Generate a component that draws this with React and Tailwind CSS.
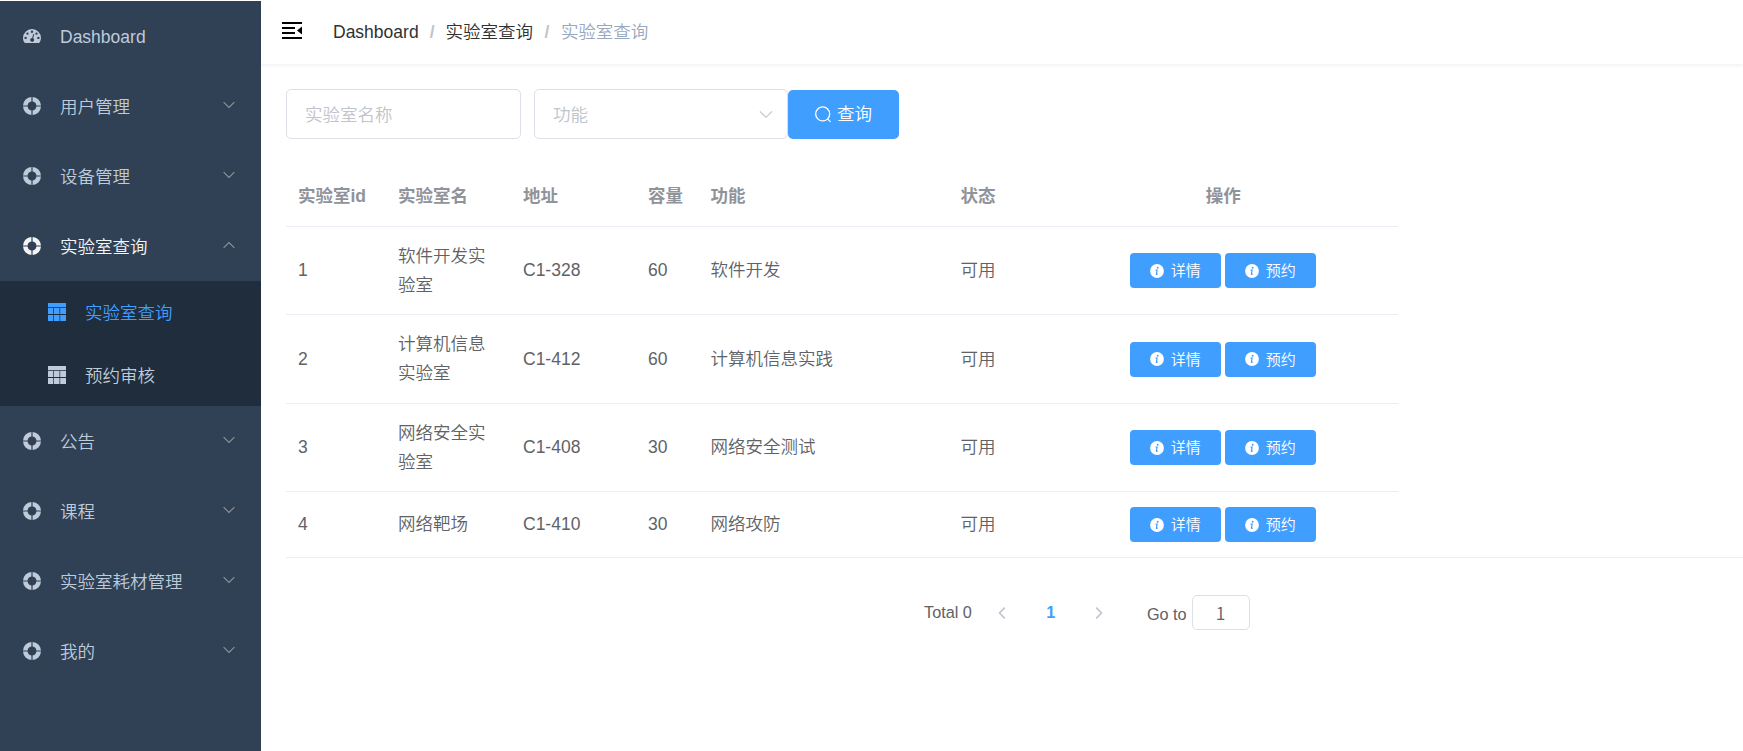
import React, { useState } from "react";

const menu = [
  { title: "Dashboard", icon: "dashboard" },
  { title: "用户管理", children: [] },
  { title: "设备管理", children: [] },
  {
    title: "实验室查询",
    open: true,
    children: [{ title: "实验室查询", active: true }, { title: "预约审核" }],
  },
  { title: "公告", children: [] },
  { title: "课程", children: [] },
  { title: "实验室耗材管理", children: [] },
  { title: "我的", children: [] },
];

const labs = [
  { id: 1, name: "软件开发实验室", address: "C1-328", capacity: 60, usage: "软件开发", status: "可用", height: "h-[88px]" },
  { id: 2, name: "计算机信息实验室", address: "C1-412", capacity: 60, usage: "计算机信息实践", status: "可用", height: "h-[89px]" },
  { id: 3, name: "网络安全实验室", address: "C1-408", capacity: 30, usage: "网络安全测试", status: "可用", height: "h-[88px]" },
  { id: 4, name: "网络靶场", address: "C1-410", capacity: 30, usage: "网络攻防", status: "可用", height: "h-[65px]" },
];

const DashboardIcon = () => (
  <svg viewBox="0 0 18 18" className="w-[18px] h-[18px] shrink-0">
    <path
      fill="currentColor"
      fillRule="evenodd"
      d="M9 2a9 9 0 0 0-9 9c0 1.8.5 3.3 1.4 4.6.2.3.5.4.8.4h13.6c.3 0 .6-.1.8-.4A8.400 8.400 0 0 0 18 11a9 9 0 0 0-9-9zM2.600 9.700a1.200 1.200 0 1 1 0 2.400 1.200 1.200 0 0 1 0-2.400zM4.500 5.400a1.200 1.200 0 1 1 0 2.400 1.200 1.200 0 0 1 0-2.400zM9 3.500a1.200 1.200 0 1 1 0 2.400 1.200 1.200 0 0 1 0-2.400zM13.500 5.400a1.200 1.200 0 1 1 0 2.400 1.200 1.200 0 0 1 0-2.400zM15.400 9.700a1.200 1.200 0 1 1 0 2.400 1.200 1.200 0 0 1 0-2.400zM10.200 7l1 .3-1 3.900a2 2 0 1 1-1-.3z"
    />
  </svg>
);

const RingIcon = () => (
  <svg viewBox="0 0 18 18" className="w-[18px] h-[18px] shrink-0" fill="currentColor">
    <path d="M8.400 0v4.600A4.400 4.400 0 0 0 4.600 8.400H0A9 9 0 0 1 8.400 0zM9.600 0v4.600a4.400 4.400 0 0 1 3.800 3.800H18A9 9 0 0 0 9.600 0zM8.400 18v-4.600a4.400 4.400 0 0 1-3.800-3.800H0A9 9 0 0 0 8.400 18zM9.600 18v-4.600a4.400 4.400 0 0 0 3.800-3.800H18A9 9 0 0 1 9.600 18z" />
  </svg>
);

const TableIcon = () => (
  <svg viewBox="0 0 18 18" className="w-[18px] h-[18px] shrink-0" fill="currentColor">
    <path d="M0 0h18v4.200H0zM0 5h5.300v6.100H0zM6 5h5.500v6.100H6zM12.200 5H18v6.100h-5.800zM0 11.900h5.300V18H0zM6 11.900h5.500V18H6zM12.200 11.900H18V18h-5.800z" />
  </svg>
);

const Chevron = ({ className }) => (
  <svg viewBox="0 0 12 8" className={className} fill="none" stroke="currentColor">
    <path d="M.6 1.200 6 6.500l5.400-5.300" />
  </svg>
);

const InfoIcon = () => (
  <svg viewBox="0 0 14 14" className="w-3.5 h-3.5">
    <circle cx="7" cy="7" r="6.900" fill="#fff" />
    <path d="M5.600 6.100h1.500L6.400 10q0 .8 1.200-.2" stroke="#409eff" strokeWidth="1.200" fill="none" />
    <circle cx="7.700" cy="3.700" r=".95" fill="#409eff" />
  </svg>
);

const ActionButton = ({ children }) => (
  <button className="flex items-center justify-center gap-[7px] w-[91px] h-[35px] rounded-[4px] bg-[#409eff] text-white text-[15px] leading-none">
    <InfoIcon />
    <span>{children}</span>
  </button>
);

const Sidebar = () => (
  <aside className="w-[261px] h-[750px] mt-px shrink-0 bg-[#304156] text-[#bfcbd9]">
    {menu.map((item) => (
      <div key={item.title}>
        <div
          className={`flex items-center h-[70px] pl-[23px] pr-[26px] cursor-pointer ${
            item.open ? "text-[#f4f4f5]" : ""
          }`}
        >
          {item.icon ? <DashboardIcon /> : <RingIcon />}
          <span className="ml-[19px] pt-0.5 flex-1">{item.title}</span>
          {item.children && (
            <Chevron
              className={`w-3 h-2 mb-[3px] stroke-[1.1] text-[#909399] ${item.open ? "rotate-180" : ""}`}
            />
          )}
        </div>
        {item.open && (
          <div className="bg-[#1f2d3d]">
            {item.children.map((child) => (
              <div
                key={child.title}
                className={`flex items-center h-[62.5px] pl-12 cursor-pointer ${
                  child.active ? "text-[#409eff]" : ""
                }`}
              >
                <TableIcon />
                <span className="ml-[19px] pt-0.5">{child.title}</span>
              </div>
            ))}
          </div>
        )}
      </div>
    ))}
  </aside>
);

const Navbar = () => (
  <header className="flex items-center h-16 pl-[21px] shadow-[0_1px_4px_rgba(0,21,41,0.08)]">
    <svg viewBox="0 0 20 18" className="w-5 h-[18px] mt-[-3px]">
      <path d="M0 0h20v2H0zM0 5h13v2H0zM0 10h13v2H0zM0 15h20v2H0zM20 4.500v8L15 8.500z" fill="#000" />
    </svg>
    <nav className="flex items-center ml-[31px] text-[#303133]">
      <span>Dashboard</span>
      <span className="mx-[11px] font-bold text-[#c0c4cc]">/</span>
      <span>实验室查询</span>
      <span className="mx-[11.5px] font-bold text-[#c0c4cc]">/</span>
      <span className="text-[#97a8be]">实验室查询</span>
    </nav>
  </header>
);

const Pagination = () => {
  const [page, setPage] = useState("1");

  return (
    <div className="flex items-center mt-[37px] ml-[638px] h-[35px] text-[16.25px] text-[#606266]">
      <span>Total 0</span>
      <Chevron className="w-3 h-2 ml-6 rotate-90 stroke-[1.6] text-[#c0c4cc]" />
      <span className="w-2.5 ml-[38px] text-center font-bold text-[#409eff]">1</span>
      <Chevron className="w-3 h-2 ml-[37px] -rotate-90 stroke-[1.6] text-[#c0c4cc]" />
      <span className="ml-[42px] pt-1">Go to</span>
      <input
        value={page}
        onChange={(e) => setPage(e.target.value)}
        className="w-[58px] h-[35px] ml-[5px] border border-[#dcdfe6] rounded-[5px] text-center text-[17.5px] outline-none font-['Noto_Sans_CJK_SC',sans-serif]"
      />
    </div>
  );
};

const App = () => {
  const [name, setName] = useState("");

  return (
    <div className="flex w-full h-[751px] overflow-hidden bg-white text-[17.5px] font-[350] font-['Liberation_Sans','Noto_Sans_CJK_SC',sans-serif]">
      <Sidebar />
      <main className="flex-1 min-w-0">
        <Navbar />
        <div className="pl-[25px] pt-[25px]">
          {/* Filters */}
          <div className="flex items-end">
            <input
              value={name}
              onChange={(e) => setName(e.target.value)}
              placeholder="实验室名称"
              className="w-[235px] h-[50px] px-[18px] pt-0.5 border border-[#dcdfe6] rounded-[5px] outline-none placeholder:text-[#c0c4cc]"
            />
            <div className="flex items-center justify-between w-[254px] h-[50px] ml-[13px] pl-[18px] pr-[14px] border border-[#dcdfe6] rounded-[5px] text-[#c0c4cc]">
              <span className="pt-0.5">功能</span>
              <Chevron className="w-[14px] h-[9px]" />
            </div>
            <button className="flex items-center justify-center gap-1.5 w-[111px] h-[49px] rounded-[5px] bg-[#409eff] text-white">
              <svg viewBox="0 0 16 17" className="w-4 h-[17px]" fill="none" stroke="#fff" strokeWidth="1.300">
                <circle cx="7.700" cy="7.900" r="7" />
                <path d="m12.600 12.900 3 3" />
              </svg>
              <span>查询</span>
            </button>
          </div>

          {/* Table */}
          <div className="mt-7 border-b border-[#ebeef5] text-[#606266]">
            <table className="table-fixed w-[1112px] border-separate border-spacing-0 text-left leading-[29px]">
              <thead>
                <tr className="h-[60px] text-[#909399] [&>th]:border-b [&>th]:border-[#ebeef5] [&>th]:px-3">
                  <th className="w-[100px] whitespace-nowrap">实验室id</th>
                  <th className="w-[125px]">实验室名</th>
                  <th className="w-[125px]">地址</th>
                  <th className="w-[62.5px] whitespace-nowrap">容量</th>
                  <th className="w-[250px]">功能</th>
                  <th className="w-[100px]">状态</th>
                  <th className="text-center">操作</th>
                </tr>
              </thead>
              <tbody className="[&>tr:not(:last-child)>td]:border-b [&>tr>td]:border-[#ebeef5] [&>tr>td]:px-3">
                {labs.map((lab) => (
                  <tr key={lab.id} className={lab.height}>
                    <td>{lab.id}</td>
                    <td>{lab.name}</td>
                    <td>{lab.address}</td>
                    <td>{lab.capacity}</td>
                    <td>{lab.usage}</td>
                    <td>{lab.status}</td>
                    <td>
                      <div className="flex justify-center gap-1 pr-px">
                        <ActionButton>详情</ActionButton>
                        <ActionButton>预约</ActionButton>
                      </div>
                    </td>
                  </tr>
                ))}
              </tbody>
            </table>
          </div>

          <Pagination />
        </div>
      </main>
    </div>
  );
};

export default App;
